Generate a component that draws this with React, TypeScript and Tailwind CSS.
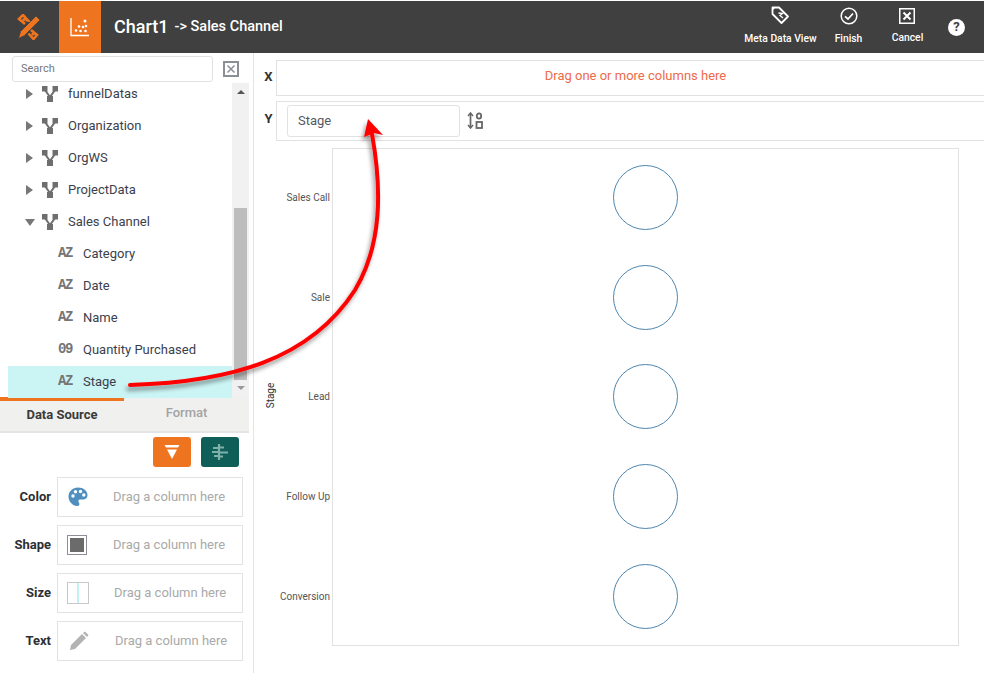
const tree = [
  { name: "funnelDatas", open: false },
  { name: "Organization", open: false },
  { name: "OrgWS", open: false },
  { name: "ProjectData", open: false },
  { name: "Sales Channel", open: true },
];

const columns = [
  { type: "AZ", name: "Category" },
  { type: "AZ", name: "Date" },
  { type: "AZ", name: "Name" },
  { type: "09", name: "Quantity Purchased" },
  { type: "AZ", name: "Stage", selected: true },
];

const stages = ["Sales Call", "Sale", "Lead", "Follow Up", "Conversion"];

const SchemaIcon = () => (
  <svg width="16" height="16" viewBox="0 0 16 16" className="shrink-0">
    <rect x="0" y="0" width="5.5" height="5.5" fill="#6e6e6e" />
    <rect x="10.5" y="0" width="5.5" height="5.5" fill="#6e6e6e" />
    <rect x="5" y="10" width="6" height="6" fill="#6e6e6e" />
    <path d="M3 4 L8 11 L13 4" stroke="#6e6e6e" strokeWidth="2" fill="none" />
  </svg>
);

const PaletteIcon = () => (
  <svg width="20" height="20" viewBox="0 0 20 20">
    <path
      d="M10 0.5C4.6 0.5 0.5 4.5 0.5 9.6c0 5 4 9.4 8.6 9.4 1.5 0 2.3-1 2.3-2.1 0-1.3-1-1.6-1-2.7 0-1 .8-1.7 1.9-1.7h2.6c2.8 0 4.6-1.7 4.6-4.3C19.5 3.800 15.300 0.500 10 0.500z"
      fill="#4f8fc0"
    />
    <circle cx="5" cy="9" r="1.700" fill="#fff" />
    <circle cx="7.500" cy="4.800" r="1.700" fill="#fff" />
    <circle cx="12.500" cy="4.500" r="1.700" fill="#fff" />
    <circle cx="15.800" cy="8" r="1.700" fill="#fff" />
  </svg>
);

const Well = ({ label, icon, iconBox, pl }: { label: string; icon: React.ReactNode; iconBox: string; pl: string }) => (
  <div className="flex items-center h-10">
    <div className="w-[51px] text-right text-[13px] font-bold text-[#2d2f33]">{label}</div>
    <div className="ml-[6px] w-[186px] h-10 border border-[#e2e2e2] flex items-center">
      <div className={iconBox}>{icon}</div>
      <span className={`text-[13px] text-[#a9a9a9] ${pl}`}>Drag a column here</span>
    </div>
  </div>
);

export default function App() {
  return (
    <div className="relative w-[984px] h-[673px] overflow-hidden bg-white font-['Roboto',sans-serif]">
      {/* Header */}
      <header className="mt-px h-[52px] bg-[#404040] flex items-center text-white">
        <div className="w-[59px] flex justify-center">
          <svg width="24" height="26" viewBox="0 0 24 26" fill="none" className="-ml-px">
            {/* ruler, two hooked ends */}
            <path d="M8 10 L2 5 L6 1 L11 6.500 L8.500 6 M8 4.500 L6 6.500" stroke="#ee7420" strokeWidth="2.600" />
            <path d="M14 16 L20 21 L16.500 25 L11.500 19.500 M17 19 L15 21" stroke="#ee7420" strokeWidth="2.600" />
            {/* pencil */}
            <path d="M19 2 L23 6 L7.500 21.500 L1.500 24.500 L3.500 17.500 Z" fill="#ee7420" stroke="#404040" strokeWidth="0.800" />
          </svg>
        </div>
        <div className="w-[42px] h-full bg-[#ee7420] flex items-center justify-center">
          <svg width="20" height="20" viewBox="0 0 20 20" fill="none">
            <path d="M1 1 V18.500 H19" stroke="#fff" strokeWidth="1.300" />
            <g fill="#fff">
              <circle cx="6" cy="13.500" r="1.300" />
              <circle cx="9" cy="9.500" r="1.300" />
              <circle cx="10.500" cy="14" r="1.300" />
              <circle cx="13" cy="10" r="1.300" />
              <circle cx="15" cy="4" r="1.500" />
              <circle cx="16" cy="9" r="1.300" />
              <circle cx="15.500" cy="14" r="1.300" />
            </g>
          </svg>
        </div>
        <div className="ml-[13px] text-[18px] font-medium -mt-0.5">Chart1</div>
        <div className="ml-[6px] text-[14.500px] font-medium -mt-px">-&gt; Sales Channel</div>
        <div className="ml-auto flex items-center text-[10.300px] font-medium">
          <div className="w-[73px] flex flex-col items-center gap-[6px]">
            <svg width="19" height="19" viewBox="0 0 19 19" fill="none" className="-mt-px">
              <path d="M1.500 1.500 H8 L17 10.500 L10.500 17 L1.500 8 Z" stroke="#fff" strokeWidth="1.800" strokeLinejoin="round" />
              <path d="M1 1 H5 L1 5 Z" fill="#fff" />
              <path d="M7.500 7 L11.500 7.500 L9 9.500 L12 12" stroke="#fff" strokeWidth="1.300" />
            </svg>
            <span className="whitespace-nowrap">Meta Data View</span>
          </div>
          <div className="ml-[19px] w-[27px] flex flex-col items-center gap-[6px] -translate-x-px">
            <svg width="18" height="18" viewBox="0 0 18 18" fill="none" className="-mt-px">
              <circle cx="9" cy="9" r="7.800" stroke="#fff" strokeWidth="1.500" />
              <path d="M5 9.300 L8 12 L13 6.500" stroke="#fff" strokeWidth="1.700" />
            </svg>
            <span>Finish</span>
          </div>
          <div className="ml-[30px] w-[31px] flex flex-col items-center gap-[6px] -translate-x-px">
            <svg width="16" height="16" viewBox="0 0 16 16" fill="none" className="-translate-x-px">
              <rect x="0.750" y="0.750" width="14.500" height="14.500" stroke="#fff" strokeWidth="1.500" />
              <path d="M4.500 4.500 L11.500 11.500 M11.500 4.500 L4.500 11.500" stroke="#fff" strokeWidth="2" />
            </svg>
            <span>Cancel</span>
          </div>
          <div className="ml-6 mr-[19px] w-[17px] h-[17px] rounded-full bg-white text-[#404040] text-[13px] font-bold flex items-center justify-center">?</div>
        </div>
      </header>

      <div className="flex h-[620px]">
        {/* Left panel */}
        <aside className="w-[254px] shrink-0 border-r border-[#e4e4e4] flex flex-col">
          <div className="flex items-center h-[30px] pl-3 pt-0.5">
            <div className="w-[201px] h-[26px] border border-[#e2e2e2] rounded-[3px] flex items-center pl-2 text-[11px] text-[#777]">Search</div>
            <div className="ml-[10px] w-4 h-4 border-2 border-[#8b8f94] flex items-center justify-center">
              <svg width="10" height="10" viewBox="0 0 10 10">
                <path d="M1.500 1.500 L8.500 8.500 M8.500 1.500 L1.500 8.500" stroke="#8b8f94" strokeWidth="1.500" />
              </svg>
            </div>
          </div>
          <div className="flex h-[314px] w-[249px]">
            <div className="w-[232px] shrink-0 flex flex-col">
              {tree.map((t) => (
                <div key={t.name} className="h-8 flex items-center shrink-0 relative -top-[5px]">
                  <div className="w-[42px] pl-[25px]">
                    {t.open ? (
                      <div className="w-0 h-0 border-x-[5px] border-x-transparent border-t-[7px] border-t-[#777]" />
                    ) : (
                      <div className="ml-px w-0 h-0 border-y-[5px] border-y-transparent border-l-[7px] border-l-[#777]" />
                    )}
                  </div>
                  <SchemaIcon />
                  <span className="ml-[10px] text-[13px] text-[#3b3f4c]">{t.name}</span>
                </div>
              ))}
              {columns.map((c) => (
                <div
                  key={c.name}
                  className={`h-8 flex items-center shrink-0 relative -top-[5px] ${c.selected ? "ml-2 bg-[#cbf4f4]" : "ml-2"}`}
                >
                  <span className="ml-[50px] w-[25px] -mt-0.5 text-[14px] font-bold text-[#757575] font-['Liberation_Mono',monospace] leading-none tracking-[-1.5px]">
                    {c.type}
                  </span>
                  <span className="text-[13px] text-[#3b3f4c]">{c.name}</span>
                </div>
              ))}
            </div>
            <div className="w-[17px] bg-[#f1f1f1] relative flex flex-col items-center justify-between py-[7px]">
              <div className="w-0 h-0 border-x-[4px] border-x-transparent border-b-[4px] border-b-[#555]" />
              <div className="absolute top-[125px] left-[2px] w-[13px] h-[172px] bg-[#bdbdbd]" />
              <div className="w-0 h-0 border-x-[4px] border-x-transparent border-t-[4px] border-t-[#999]" />
            </div>
          </div>
          <div className="w-[249px] h-9 bg-[#f0f0ef] border-b-2 border-[#e4e4e4] flex text-[13px]">
            <div className="w-[124px] border-t-4 border-[#ee7420] text-center font-bold text-[#3a3a3a] pt-1">Data Source</div>
            <div className="flex-1 text-center text-[#a3a3a3] pt-[6px] font-medium">Format</div>
          </div>
          <div className="flex gap-[10px] pl-[153px] pt-1 pb-2.5">
            <div className="w-[38px] h-[30px] rounded-[3px] bg-[#ee7420] flex items-center justify-center">
              <svg width="16" height="16" viewBox="0 0 16 16" fill="#fff">
                <path d="M0.500 1 H15.500 L14 3.500 H2 Z" />
                <path d="M3 5.500 H13 L8 15 Z" />
              </svg>
            </div>
            <div className="w-[38px] h-[30px] rounded-[3px] bg-[#0f5f58] flex items-center justify-center">
              <svg width="18" height="16" viewBox="0 0 18 16" fill="none" stroke="#7fb0aa" strokeWidth="2.200">
                <path d="M8 0 V16" />
                <path d="M2 4 H8 M8 3.500 H13 M1 8 H8 M8 8.500 H17 M3 12 H8 M8 12.500 H12" />
              </svg>
            </div>
          </div>
          <div className="flex flex-col gap-2 pl-0">
            <Well label="Color" pl="pl-[25px]" iconBox="ml-[10px] w-[20px]" icon={<PaletteIcon />} />
            <Well
              label="Shape"
              pl="pl-[26px]"
              iconBox="ml-[9px] w-[20px]"
              icon={
                <div className="w-[20px] h-[20px] border border-[#8c8f99] flex items-center justify-center">
                  <div className="w-3.5 h-3.5 bg-[#6b6b6b]" />
                </div>
              }
            />
            <Well
              label="Size"
              pl="pl-[25px]"
              iconBox="ml-[9px] w-[22px]"
              icon={
                <div className="w-[22px] h-[22px] border border-[#c9c9c9] pl-[9px]">
                  <div className="w-0.5 h-full bg-[#c4f2f2]" />
                </div>
              }
            />
            <Well
              label="Text"
              pl="pl-[26px]"
              iconBox="ml-[11px] w-[20px]"
              icon={
                <svg width="20" height="20" viewBox="0 0 20 20" fill="#b3b3b3">
                  <path d="M1 19 L2 14 L13 3 L17 7 L6 18 Z" />
                  <path d="M14 2 L16 0.500 L19.500 4 L18 6 Z" />
                </svg>
              }
            />
          </div>
        </aside>

        {/* Main */}
        <main className="flex-1 min-w-0 flex flex-col">
          <div className="flex items-center h-9 mt-[7px]">
            <div className="w-[22px] pl-[7px] text-center text-[13px] font-bold text-[#333] -mt-0.5">X</div>
            <div className="flex-1 h-9 border border-r-0 border-[#e2e2e2] flex items-center justify-center pl-[10px] pb-[5px] text-[13px] text-[#ee6a4a]">
              Drag one or more columns here
            </div>
          </div>
          <div className="flex items-center h-10 mt-[5px]">
            <div className="w-[22px] pl-[7px] text-center text-[13px] font-bold text-[#333] -mt-1">Y</div>
            <div className="flex-1 h-10 border border-r-0 border-[#e2e2e2] flex items-center pl-[10px]">
              <div className="w-[173px] h-8 border border-[#e2e2e2] rounded-[3px] flex items-center pl-[10px] text-[13px] text-[#55595f]">Stage</div>
              <svg width="16" height="17" viewBox="0 0 16 17" fill="none" className="ml-[7px] -mt-px" stroke="#666">
                <path d="M3.500 2 V15" strokeWidth="1.700" />
                <path d="M1 4 L3.500 1 L6 4 M1 13 L3.500 16 L6 13" strokeWidth="1.500" />
                <ellipse cx="12" cy="4" rx="2.200" ry="2.600" strokeWidth="1.800" />
                <rect x="9.500" y="10" width="5.500" height="6" strokeWidth="1.800" />
              </svg>
            </div>
          </div>
          <div className="flex mt-[7px] h-[498px]">
            <div className="w-[31px] flex items-center justify-center">
              <span className="-rotate-90 text-[10px] text-[#333] relative left-px -top-0.5">Stage</span>
            </div>
            <div className="w-[47px] flex flex-col text-[10px] text-[#555] text-right pr-0.5">
              {stages.map((s) => (
                <div key={s} className="flex-1 flex items-center justify-end">
                  {s}
                </div>
              ))}
            </div>
            <div className="w-[627px] outline-1 -outline-offset-1 outline-[#e2e2e2] flex flex-col">
              {stages.map((s) => (
                <div key={s} className="flex-1 flex items-center justify-center">
                  <div className="w-[65px] h-[65px] rounded-full border border-[#4f86ad]" />
                </div>
              ))}
            </div>
          </div>
        </main>
      </div>

      {/* Annotation arrow */}
      <svg width="984" height="673" className="absolute inset-0 pointer-events-none">
        <defs>
          <filter id="arrowShadow" x="-10%" y="-10%" width="120%" height="120%">
            <feDropShadow dx="-2" dy="4" stdDeviation="2" floodColor="#000" floodOpacity="0.4" />
          </filter>
        </defs>
        <g filter="url(#arrowShadow)">
          <path d="M130 385 C 230 382, 310 360, 355 290 C 382 245, 382 190, 372 134" fill="none" stroke="#ff0000" strokeWidth="4" strokeLinecap="round" />
          <path d="M368 119 L383 135 L374 133 L364 137 Z" fill="#ff0000" />
        </g>
      </svg>
    </div>
  );
}
